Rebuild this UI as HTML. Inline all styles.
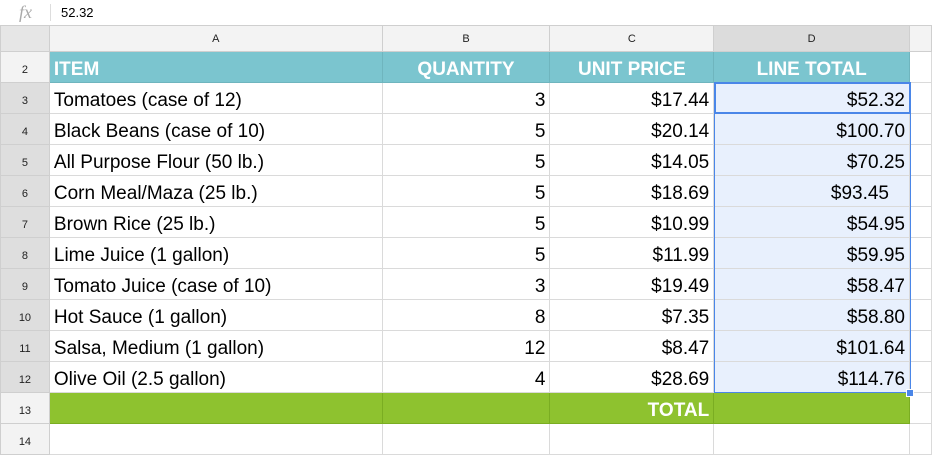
<!DOCTYPE html>
<html><head><style>
body{margin:0;width:932px;height:442px;overflow:hidden;background:#fff;font-family:"Liberation Sans",sans-serif;position:relative}
.fb{position:absolute;left:0;top:0;width:932px;height:25px;border-bottom:1px solid #d4d4d4;background:#fff}
.fx{position:absolute;left:19px;top:2px;font-family:"Liberation Serif",serif;font-style:italic;color:#aaa;font-size:18px}
.sep{position:absolute;left:50px;top:4px;width:1px;height:17px;background:#ddd}
.fv{position:absolute;left:61px;top:5px;font-size:13px;color:#000}
table{position:absolute;left:0;top:25px;border-collapse:collapse;table-layout:fixed}
td{border:1px solid #dadada;padding:0 4px;height:30px;font-size:19px;white-space:nowrap;overflow:hidden;font-family:"Liberation Sans",sans-serif}
td span{position:relative;top:3px}
tr.ch td{height:25px;background:#f3f3f3;text-align:center;font-size:11px;color:#222;border-color:#cfcfcf}
td.rh{background:#f3f3f3;text-align:center;font-size:11px;color:#222;padding:0;border-color:#cfcfcf}
td.rs{background:#dedede}
tr.h td.c{background:#7bc5cf;color:#fff;font-weight:bold;border-color:#6fb5be}
tr.t td.c{background:#8ec22f;color:#fff;font-weight:bold;border-color:#7aad22}
.r{text-align:right}
.ctr{text-align:center}
td.d{background:#e8f0fd}
.sel{position:absolute;left:714px;top:82px;width:195px;height:309px;border:1px solid #4a86e8}
.sel2{position:absolute;left:714px;top:82px;border:2px solid #4a86e8;box-sizing:border-box;width:197px;height:32px}
.hdl{position:absolute;left:906px;top:389px;width:6px;height:6px;background:#4a86e8;border:1px solid #fff}
</style></head><body>
<div class="fb"><span class="fx">fx</span><div class="sep"></div><span class="fv">52.32</span></div>
<table>
<colgroup><col style="width:49px"><col style="width:333px"><col style="width:168px"><col style="width:164px"><col style="width:196px"><col style="width:22px"></colgroup>
<tr class="ch"><td style="background:#e6e6e6"></td><td>A</td><td>B</td><td>C</td><td style="background:#dcdcdc">D</td><td></td></tr>
<tr class="h"><td class="rh"><span>2</span></td><td class="c"><span>ITEM</span></td><td class="c ctr"><span>QUANTITY</span></td><td class="c ctr"><span>UNIT PRICE</span></td><td class="c ctr"><span>LINE TOTAL</span></td><td></td></tr>
<tr><td class="rh rs"><span>3</span></td><td><span>Tomatoes (case of 12)</span></td><td class="r"><span>3</span></td><td class="r"><span>$17.44</span></td><td class="r d"><span>$52.32</span></td><td></td></tr>
<tr><td class="rh rs"><span>4</span></td><td><span>Black Beans (case of 10)</span></td><td class="r"><span>5</span></td><td class="r"><span>$20.14</span></td><td class="r d"><span>$100.70</span></td><td></td></tr>
<tr><td class="rh rs"><span>5</span></td><td><span>All Purpose Flour (50 lb.)</span></td><td class="r"><span>5</span></td><td class="r"><span>$14.05</span></td><td class="r d"><span>$70.25</span></td><td></td></tr>
<tr><td class="rh rs"><span>6</span></td><td><span>Corn Meal/Maza (25 lb.)</span></td><td class="r"><span>5</span></td><td class="r"><span>$18.69</span></td><td class="r d" style="padding-right:20px"><span>$93.45</span></td><td></td></tr>
<tr><td class="rh rs"><span>7</span></td><td><span>Brown Rice (25 lb.)</span></td><td class="r"><span>5</span></td><td class="r"><span>$10.99</span></td><td class="r d"><span>$54.95</span></td><td></td></tr>
<tr><td class="rh rs"><span>8</span></td><td><span>Lime Juice (1 gallon)</span></td><td class="r"><span>5</span></td><td class="r"><span>$11.99</span></td><td class="r d"><span>$59.95</span></td><td></td></tr>
<tr><td class="rh rs"><span>9</span></td><td><span>Tomato Juice (case of 10)</span></td><td class="r"><span>3</span></td><td class="r"><span>$19.49</span></td><td class="r d"><span>$58.47</span></td><td></td></tr>
<tr><td class="rh rs"><span>10</span></td><td><span>Hot Sauce (1 gallon)</span></td><td class="r"><span>8</span></td><td class="r"><span>$7.35</span></td><td class="r d"><span>$58.80</span></td><td></td></tr>
<tr><td class="rh rs"><span>11</span></td><td><span>Salsa, Medium (1 gallon)</span></td><td class="r"><span>12</span></td><td class="r"><span>$8.47</span></td><td class="r d"><span>$101.64</span></td><td></td></tr>
<tr><td class="rh rs"><span>12</span></td><td><span>Olive Oil (2.5 gallon)</span></td><td class="r"><span>4</span></td><td class="r"><span>$28.69</span></td><td class="r d"><span>$114.76</span></td><td></td></tr>
<tr class="t"><td class="rh"><span>13</span></td><td class="c"></td><td class="c"></td><td class="c r"><span>TOTAL</span></td><td class="c"></td><td></td></tr>
<tr><td class="rh"><span>14</span></td><td></td><td></td><td></td><td></td><td></td></tr>
</table>
<div class="sel"></div>
<div class="sel2"></div>
<div class="hdl"></div>
</body></html>
